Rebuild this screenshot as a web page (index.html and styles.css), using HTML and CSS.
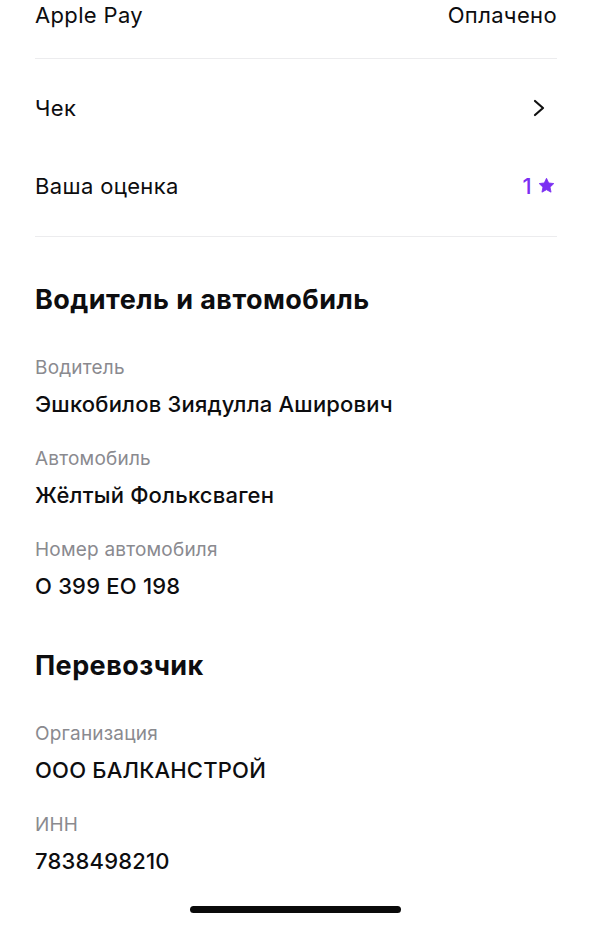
FILE: index.html
```html
<!DOCTYPE html>
<html lang="ru">
<head>
<meta charset="utf-8">
<link rel="stylesheet" href="styles.css">
</head>
<body>
<main class="page">
  <div class="row row-top">
    <span>Apple Pay</span>
    <span>Оплачено</span>
  </div>
  <div class="sep sep-1"></div>
  <div class="row row-check">
    <span>Чек</span>
    <svg class="chev" width="14" height="18" viewBox="0 0 14 18"><path d="M3 2 L11 9 L3 16" fill="none" stroke="#111" stroke-width="2.2" stroke-linecap="round" stroke-linejoin="round"/></svg>
  </div>
  <div class="row row-rate">
    <span>Ваша оценка</span>
    <span class="rate">1<svg class="star" width="17" height="17" viewBox="0 0 24 24"><path d="M12 1.8l3.1 6.6 7.2.9-5.3 5 1.4 7.1L12 17.9l-6.4 3.5 1.4-7.1-5.3-5 7.2-.9z" fill="#7b2ff2" stroke="#7b2ff2" stroke-width="1.2" stroke-linejoin="round"/></svg></span>
  </div>
  <div class="sep sep-2"></div>

  <section class="section section-driver">
    <h2 class="title">Водитель и автомобиль</h2>
    <div class="fields">
      <div class="field"><div class="label">Водитель</div><div class="value">Эшкобилов Зиядулла Аширович</div></div>
      <div class="field"><div class="label">Автомобиль</div><div class="value">Жёлтый Фольксваген</div></div>
      <div class="field"><div class="label">Номер автомобиля</div><div class="value">О 399 ЕО 198</div></div>
    </div>
  </section>

  <section class="section section-carrier">
    <h2 class="title">Перевозчик</h2>
    <div class="fields">
      <div class="field"><div class="label">Организация</div><div class="value">ООО БАЛКАНСТРОЙ</div></div>
      <div class="field"><div class="label">ИНН</div><div class="value">7838498210</div></div>
    </div>
  </section>
  <div class="sep sep-bottom"></div>
</main>
<div class="home-bar"></div>
</body>
</html>
```

FILE: styles.css
```css
html, body {
  margin: 0;
  padding: 0;
  background: #ffffff;
}
body {
  font-family: Inter, "Noto Sans", Roboto, sans-serif;
  color: #0d0d0f;
  width: 591px;
  height: 926px;
  overflow: hidden;
  position: relative;
}
.page {
  padding: 2px 34px 0 35px;
  display: flex;
  flex-direction: column;
}
.row {
  display: flex;
  justify-content: space-between;
  align-items: center;
  font-size: 22px;
  font-weight: 400;
  letter-spacing: 0.35px;
  line-height: 26px;
  height: 26px;
}
.sep {
  height: 1px;
  background: #ececee;
}
.sep-1 { margin-top: 30px; }
.row-check { margin-top: 36px; }
.chev { margin-right: 11px; }
.row-rate { margin-top: 52px; }
.rate {
  color: #7b2ff2;
  font-weight: 500;
  display: flex;
  align-items: center;
  gap: 6px;
  margin-right: 2px;
}
.star { margin-top: -1px; }
.sep-2 { margin-top: 37px; }
.section-driver { margin-top: 47px; }
.section-carrier { margin-top: 51px; }
.title {
  margin: 0;
  font-size: 27px;
  line-height: 32px;
  font-weight: 700;
  letter-spacing: 0.45px;
}
.fields {
  display: flex;
  flex-direction: column;
  gap: 31px;
  margin-top: 41px;
}
.field {
  display: flex;
  flex-direction: column;
  gap: 12px;
}
.label {
  font-size: 19px;
  line-height: 22px;
  letter-spacing: 0.2px;
  color: #8a8a8f;
}
.value {
  font-size: 22px;
  font-weight: 500;
  letter-spacing: 0.2px;
  line-height: 26px;
}
.sep-bottom {
  margin-top: 52px;
  background: #f0f0f2;
}
.home-bar {
  position: absolute;
  left: 190px;
  top: 906px;
  width: 211px;
  height: 7px;
  border-radius: 4px;
  background: #0a0a0a;
}
```
